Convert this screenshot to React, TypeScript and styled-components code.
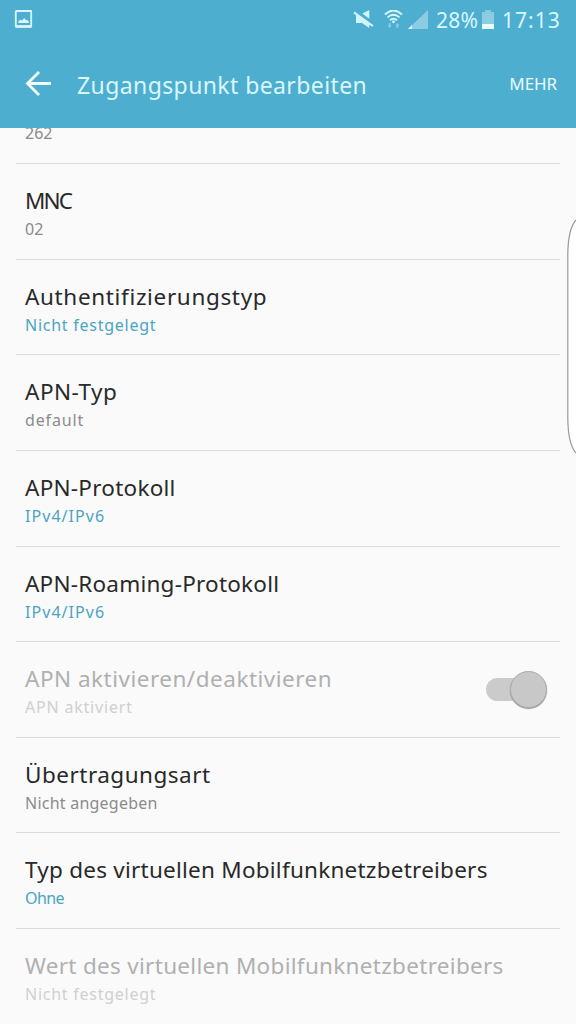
import React from 'react';
import styled, { createGlobalStyle } from 'styled-components';

const Global = createGlobalStyle`
  * { box-sizing: border-box; }
  body { margin: 0; background: #fafafa; font-family: "Noto Sans", sans-serif; }
`;

const Screen = styled.main`
  position: relative;
  width: 576px;
  height: 1024px;
  overflow: hidden;
  background: #fafafa;
  display: flex;
  flex-direction: column;
`;

const Header = styled.header`
  flex: none;
  height: 128px;
  background: #4eaecf;
  color: #d9f7ff;
`;

const StatusBar = styled.div`
  display: flex;
  align-items: center;
  height: 40px;
  padding: 0 16px 0 14px;
`;

const StatusIcons = styled.div`
  display: flex;
  align-items: center;
  margin-left: auto;
`;

const StatusText = styled.span<{ $gap: number; $spacing: number; $width: number }>`
  font-size: 21px;
  line-height: 40px;
  width: ${(p) => p.$width}px;
  margin-left: ${(p) => p.$gap}px;
  letter-spacing: ${(p) => p.$spacing}px;
  white-space: nowrap;
`;

const Icon = styled.svg<{ $gap?: number }>`
  display: block;
  flex: none;
  margin-left: ${(p) => p.$gap ?? 0}px;
`;

const ActionBar = styled.div`
  display: flex;
  align-items: center;
  height: 87px;
  padding: 0 19px 0 25px;
`;

const PageTitle = styled.h1`
  margin: 2px 0 0 25px;
  font-size: 23px;
  font-weight: 400;
  line-height: 32px;
  letter-spacing: 0.4px;
  white-space: nowrap;
`;

const MoreButton = styled.button`
  margin-left: auto;
  padding: 0;
  border: 0;
  background: none;
  color: #e9fbff;
  font: 400 17px/24px "Noto Sans", sans-serif;
  letter-spacing: -0.1px;
`;

const List = styled.div`
  flex: 1;
  min-height: 0;
  overflow: hidden;
  padding: 0 16px;
`;

type Tone = 'normal' | 'accent' | 'disabled';
const subColor = { normal: '#8b8b8b', accent: '#4aa5c1', disabled: '#d0d0d0' };

const Row = styled.div<{ $partial?: boolean }>`
  display: flex;
  justify-content: space-between;
  height: ${(p) => (p.$partial ? '36px' : '95.65px')};
  padding: ${(p) => (p.$partial ? '0 9px' : '21px 13px 0 9px')};
  border-bottom: 1px solid #dcdcdc;
`;

const Label = styled.div<{ $spacing: number; $tone: Tone }>`
  font-size: 22.5px;
  line-height: 32px;
  letter-spacing: ${(p) => p.$spacing}px;
  color: ${(p) => (p.$tone === 'disabled' ? '#b0b0b0' : '#292929')};
  white-space: nowrap;
`;

const Value = styled.div<{ $spacing: number; $tone: Tone; $clipped?: boolean }>`
  font-size: 16px;
  line-height: 24px;
  margin-top: ${(p) => (p.$clipped ? '-7px' : '0')};
  letter-spacing: ${(p) => p.$spacing}px;
  color: ${(p) => subColor[p.$tone]};
  white-space: nowrap;
`;

const Toggle = styled.div`
  display: flex;
  align-items: center;
  width: 61px;
  height: 38px;
  margin-top: 7px;
`;

const Track = styled.div`
  width: 42px;
  height: 23px;
  border-radius: 12px;
  background: #cbcbcb;
`;

const Knob = styled.div`
  flex: none;
  width: 37px;
  height: 37px;
  margin-left: -18px;
  border: 1px solid #acacac;
  border-radius: 50%;
  background: #c8c8c8;
  box-shadow: 0 1px 1px #929292;
`;

const EdgeHandle = styled.svg`
  position: absolute;
  right: 0;
  top: 218px;
`;

type Item = { label: string; ls: number; value: string; vs: number; tone: Tone; toggle?: boolean };

const items: Item[] = [
  { label: 'MNC', ls: -1.9, value: '02', vs: 0, tone: 'normal' },
  { label: 'Authentifizierungstyp', ls: 0.65, value: 'Nicht festgelegt', vs: 0.75, tone: 'accent' },
  { label: 'APN-Typ', ls: 0.5, value: 'default', vs: 0.85, tone: 'normal' },
  { label: 'APN-Protokoll', ls: 0.25, value: 'IPv4/IPv6', vs: 1.05, tone: 'accent' },
  { label: 'APN-Roaming-Protokoll', ls: 0.23, value: 'IPv4/IPv6', vs: 1.05, tone: 'accent' },
  { label: 'APN aktivieren/deaktivieren', ls: 0.5, value: 'APN aktiviert', vs: 0.8, tone: 'disabled', toggle: true },
  { label: 'Übertragungsart', ls: 0.5, value: 'Nicht angegeben', vs: 0.23, tone: 'normal' },
  { label: 'Typ des virtuellen Mobilfunknetzbetreibers', ls: 0.24, value: 'Ohne', vs: -0.6, tone: 'accent' },
  { label: 'Wert des virtuellen Mobilfunknetzbetreibers', ls: 0.3, value: 'Nicht festgelegt', vs: 0.75, tone: 'disabled' },
];

export default function App() {
  return (
    <Screen>
      <Global />
      <Header>
        <StatusBar>
          <Icon width="19" height="20" viewBox="0 0 19 20">
            <rect x="1.8" y="1" width="15.4" height="15.5" rx="0.5" fill="none" stroke="#d9f7ff" strokeWidth="1.8" />
            <path d="M1.5 15.2h16v2.6h-16zM4.5 13v-2l2-1.3 1.5.8L10.3 8l1.7 2.3 1.5-.3 1.3 1.8V13z" fill="#d9f7ff" />
          </Icon>
          <StatusIcons>
            <Icon width="21" height="20" viewBox="0 0 21 20" fill="#d3f4fd">
              <path d="M9.3 3.6L16.3 0v8.8z" />
              <path d="M1.5 1.6L20.5 15.2l-1.2 1.6-3-2.1V18L9 13H3V5.2L.4 3.2z" />
            </Icon>
            <Icon $gap={10} width="19" height="20" viewBox="0 0 19 20" fill="none" stroke="#d9f7ff" strokeWidth="1.8">
              <path d="M1 4.5Q9.5-3.5 18 4.5M3.5 7.4q6-5.2 12 0M6 10.2q3.5-3 7 0" />
              <circle cx="9.5" cy="11.8" r="1.4" fill="#d9f7ff" stroke="none" />
              <path d="M5.7 18l-2.2-2.5h1.3V13h1.8v2.5h1.3zM13.3 13l2.2 2.5h-1.3V18h-1.8v-2.5h-1.3z" fill="#8ccbe1" stroke="none" />
            </Icon>
            <Icon $gap={5} width="21" height="20" viewBox="0 0 21 20">
              <path d="M20 0v19H0z" fill="#8ccce2" />
              <path d="M4 15v4H0z" fill="#e0faff" />
            </Icon>
            <StatusText $gap={7} $spacing={0.2} $width={41}>28%</StatusText>
            <Icon $gap={4} width="14" height="20" viewBox="0 0 14 20">
              <path d="M4 0h6v2h3v17H1V2h3z" fill="#8ccce2" />
              <path d="M1 14h12v5H1z" fill="#e9fcff" />
            </Icon>
            <StatusText $gap={7} $spacing={1} $width={58}>17:13</StatusText>
          </StatusIcons>
        </StatusBar>
        <ActionBar>
          <Icon width="27" height="26" viewBox="0 0 27 26" fill="none" stroke="#f2fdff" strokeWidth="2.8">
            <path d="M14 1L2.5 12.5 14 24M3 12.5h23" />
          </Icon>
          <PageTitle>Zugangspunkt bearbeiten</PageTitle>
          <MoreButton>MEHR</MoreButton>
        </ActionBar>
      </Header>
      <List>
        <Row $partial>
          <Value $spacing={0} $tone="normal" $clipped>262</Value>
        </Row>
        {items.map((item) => (
          <Row key={item.label}>
            <div>
              <Label $spacing={item.ls} $tone={item.tone}>{item.label}</Label>
              <Value $spacing={item.vs} $tone={item.tone}>{item.value}</Value>
            </div>
            {item.toggle && (
              <Toggle>
                <Track />
                <Knob />
              </Toggle>
            )}
          </Row>
        ))}
      </List>
      <EdgeHandle width="9" height="238" viewBox="0 0 9 238">
        <path d="M9 2Q1 11 .8 37V200Q1 226 9 235" fill="#fff" stroke="#999" strokeWidth="1.2" />
      </EdgeHandle>
    </Screen>
  );
}
